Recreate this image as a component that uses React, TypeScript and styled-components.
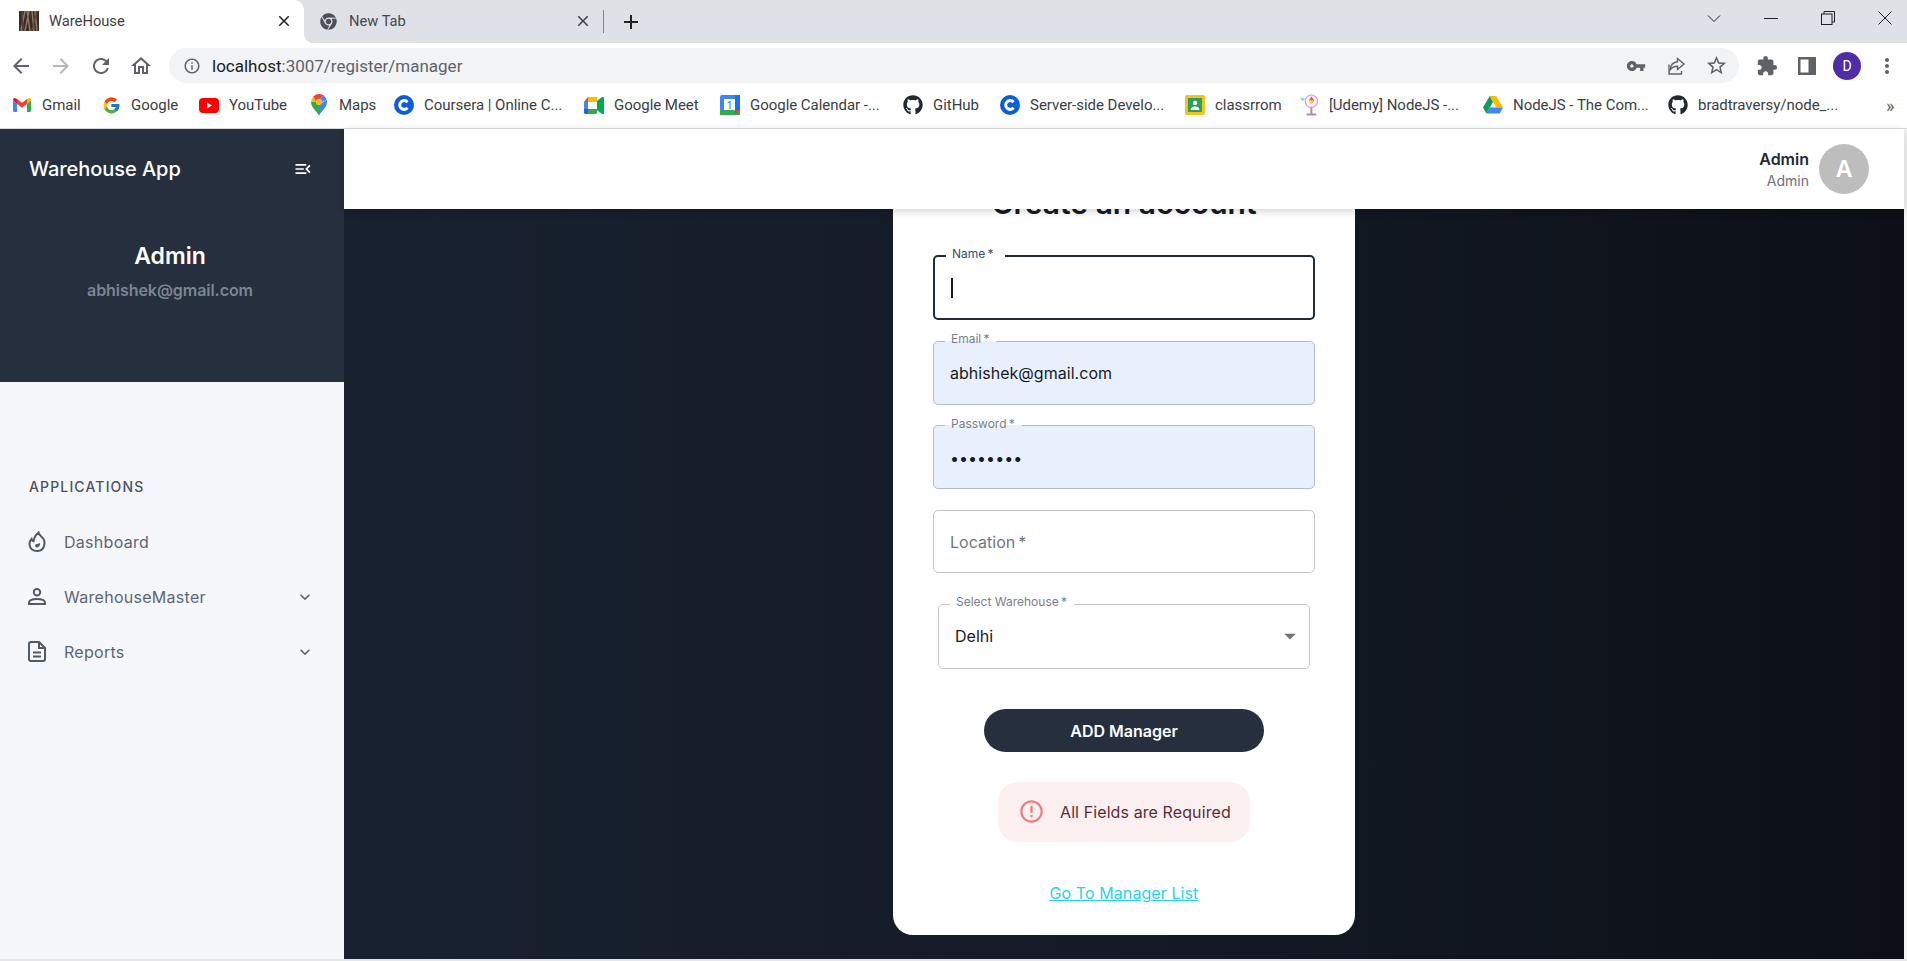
import React from "react"
import styled, { createGlobalStyle } from "styled-components"
import { FaChrome, FaGithub } from "react-icons/fa"
import { FcGoogle } from "react-icons/fc"
import {
  MdArrowBack,
  MdArrowForward,
  MdRefresh,
  MdOutlineHome,
  MdInfoOutline,
  MdVpnKey,
  MdStarBorder,
  MdExtension,
  MdMoreVert,
  MdClose,
  MdAdd,
  MdMenuOpen,
  MdExpandMore,
  MdArrowDropDown,
  MdErrorOutline,
} from "react-icons/md"

const GlobalStyle = createGlobalStyle`
  html, body, #root {
    margin: 0;
    height: 100%;
    overflow: hidden;
  }
  * {
    box-sizing: border-box;
  }
  body {
    font-family: Inter, "Liberation Sans", sans-serif;
    background: #fff;
  }
`

const Page = styled.div`
  display: flex;
  flex-direction: column;
  height: 961px;
  background: #e6e6e6;
`

/* browser chrome */
const TabStrip = styled.div`
  display: flex;
  align-items: stretch;
  flex: 0 0 43px;
  background: #dee1e6;
  font-family: Roboto, "Liberation Sans", sans-serif;
  color: #3c4043;
`

const Tab = styled.div<{ $active?: boolean }>`
  position: relative;
  display: flex;
  align-items: center;
  width: ${(p) => (p.$active ? "304px" : "299px")};
  padding: ${(p) => (p.$active ? "0 11px 1px 19px" : "0 11px 1px 16px")};
  background: ${(p) => (p.$active ? "#fff" : "transparent")};
  border-radius: 0 10px 0 0;
  font-size: 14.7px;

  &::after {
    content: ${(p) => (p.$active ? '""' : "none")};
    position: absolute;
    right: -10px;
    bottom: 0;
    width: 10px;
    height: 10px;
    background: radial-gradient(circle at top right, transparent 10px, #fff 10.5px);
  }
`

const TabTitle = styled.span<{ $active?: boolean }>`
  flex: 1;
  margin-left: ${(p) => (p.$active ? "10px" : "12px")};
  color: ${(p) => (p.$active ? "#3c4043" : "#45494e")};
`

const TabDivider = styled.div`
  flex: 0 0 1px;
  margin: 10px 0 10px;
  background: #80868b;
`

const NewTab = styled.div`
  display: flex;
  align-items: center;
  margin-left: 15px;
  flex: 1;
  color: #202124;
`

const WindowButtons = styled.div`
  display: flex;
  align-items: center;
  gap: 43px;
  padding: 0 15px 7px 0;
  color: #202124;
`

const Toolbar = styled.div`
  display: flex;
  align-items: center;
  flex: 0 0 40px;
  padding: 5px 0 0 9px;
  background: #fff;
  color: #5f6368;
`

const NavIcons = styled.div`
  display: flex;
  align-items: center;
  gap: 16px;
  width: 160px;
`

const UrlBar = styled.div`
  display: flex;
  align-items: center;
  width: 1570px;
  height: 35px;
  padding: 0 3px 0 14px;
  border-radius: 18px;
  background: #f1f3f4;
  font-family: Roboto, "Liberation Sans", sans-serif;
  font-size: 17px;
`

const UrlText = styled.span`
  flex: 1;
  margin-left: 11px;
  color: #5f6368;

  b {
    font-weight: 400;
    color: #202124;
  }
`

const IconSlot = styled.span`
  display: flex;
  align-items: center;
  justify-content: center;
  width: 40px;
`

const ToolbarEnd = styled.div`
  display: flex;
  align-items: center;
  margin-left: 8px;
`

const ProfileBadge = styled.div`
  display: flex;
  align-items: center;
  justify-content: center;
  width: 28px;
  height: 28px;
  border-radius: 50%;
  background: #4f2da7;
  color: #fff;
  font-family: Roboto, "Liberation Sans", sans-serif;
  font-size: 14px;
`

const Bookmarks = styled.div`
  display: flex;
  align-items: center;
  gap: 21px;
  flex: 0 0 46px;
  padding: 0 0 1px 12px;
  background: #fff;
  border-bottom: 1px solid #dadce0;
  font-family: Roboto, "Liberation Sans", sans-serif;
  font-size: 15px;
  letter-spacing: -0.03px;
  color: #3c4043;
`

const Bookmark = styled.div`
  display: flex;
  align-items: center;
  gap: 10px;
`

const BookmarkIcon = styled.span`
  display: flex;
  align-items: center;
  justify-content: center;
  width: 20px;
  height: 20px;
`

const BookmarkLabel = styled.span<{ $w: number }>`
  width: ${(p) => p.$w}px;
  white-space: nowrap;
`

const MoreBookmarks = styled.span`
  margin-left: 28px;
  font-size: 18px;
  color: #5f6368;
`

/* app */
const AppShell = styled.div`
  display: flex;
  flex: 0 0 830px;
  min-height: 0;
`

const Sidebar = styled.aside`
  display: flex;
  flex-direction: column;
  flex: 0 0 344px;
  background: #f5f7fa;
`

const SideHeader = styled.div`
  display: flex;
  flex-direction: column;
  flex: 0 0 253px;
  padding: 26px 29px 0;
  background: #252f3e;
  color: #fff;
`

const BrandRow = styled.div`
  display: flex;
  align-items: center;
  justify-content: space-between;
  padding-right: 2px;
  font-size: 20px;
  font-weight: 500;
  line-height: 28px;
  letter-spacing: -0.05px;
`

const SideUser = styled.div`
  display: flex;
  flex-direction: column;
  align-items: center;
  gap: 9px;
  margin: 58px 4px 0 0;
`

const SideName = styled.div`
  font-size: 23px;
  font-weight: 600;
  line-height: 30px;
`

const SideEmail = styled.div`
  font-size: 16px;
  font-weight: 600;
  line-height: 20px;
  letter-spacing: -0.05px;
  color: #7d8592;
`

const Nav = styled.nav`
  display: flex;
  flex-direction: column;
  padding: 95px 29px 0 28px;
  color: #5c6675;
`

const NavHeading = styled.div`
  margin: 0 0 17px 1px;
  font-size: 14px;
  font-weight: 500;
  letter-spacing: 1.15px;
  line-height: 20px;
  color: #4b5361;
`

const NavItem = styled.div`
  display: flex;
  align-items: center;
  height: 55px;
  font-size: 16px;
  font-weight: 400;
`

const NavIcon = styled.span`
  display: flex;
  align-items: center;
  justify-content: center;
  width: 18px;
  height: 24px;
`

const NavLabel = styled.span`
  flex: 1;
  margin-left: 18px;
  letter-spacing: 0.28px;
`

const Content = styled.div`
  display: flex;
  flex-direction: column;
  flex: 1;
  min-width: 0;
  padding-right: 3px;
  background: #f5f5f5;
`

const Topbar = styled.header`
  position: relative;
  z-index: 2;
  display: flex;
  align-items: center;
  justify-content: flex-end;
  gap: 10px;
  flex: 0 0 80px;
  padding: 0 35px 0 0;
  background: #fff;
  box-shadow: 0 2px 8px rgba(0, 0, 0, 0.18);
`

const TopUser = styled.div`
  display: flex;
  flex-direction: column;
  align-items: flex-end;
  gap: 3px;
`

const TopName = styled.div`
  font-size: 16px;
  font-weight: 600;
  line-height: 20px;
  color: #212b36;
`

const TopRole = styled.div`
  font-size: 14px;
  line-height: 18px;
  color: #6b7280;
`

const Avatar = styled.div`
  display: flex;
  align-items: center;
  justify-content: center;
  width: 50px;
  height: 50px;
  border-radius: 50%;
  background: #bdbdbd;
  color: #fff;
  font-size: 23px;
  font-weight: 600;
`

const Main = styled.main`
  display: flex;
  flex-direction: column;
  justify-content: flex-end;
  align-items: center;
  flex: 1;
  min-height: 0;
  overflow: hidden;
  padding-bottom: 24px;
  background: linear-gradient(90deg, #182130 0%, #141b27 50%, #0c1016 100%);
`

const Card = styled.section`
  display: flex;
  flex-direction: column;
  align-items: center;
  flex-shrink: 0;
  width: 462px;
  padding: 0 40px 32px;
  border-radius: 20px;
  background: #fff;
`

const CardTitle = styled.h1`
  margin: 0 0 28px;
  font-size: 30px;
  font-weight: 600;
  line-height: 36px;
  color: #161c24;
`

const Form = styled.form`
  display: flex;
  flex-direction: column;
  align-items: center;
  gap: 14px;
  width: 100%;
`

const Field = styled.fieldset<{ $h: number; $focused?: boolean; $filled?: boolean; $select?: boolean }>`
  display: block;
  margin: ${(p) => (p.$select ? "10px 0 0" : "0")};
  padding: 0 16px;
  width: ${(p) => (p.$select ? 372 : 382)}px;
  height: ${(p) => p.$h}px;
  min-width: 0;
  border: ${(p) => (p.$focused ? "2px solid #212b3b" : p.$filled ? "1px solid #b3bccb" : "1px solid #c4c4c4")};
  border-radius: 5px;
  background: ${(p) => (p.$filled ? "#e8f0fe" : "#fff")};
`

const FieldLabel = styled.legend<{ $focused?: boolean }>`
  margin-left: -5px;
  padding: 0 ${(p) => (p.$focused ? "11px" : "7px")} 0 6px;
  font-size: 12px;
  line-height: 14px;
  color: ${(p) => (p.$focused ? "#34506e" : "#7a7f87")};

  span {
    display: block;
    transform: translateY(-2px);
  }
`

const EmptyLabel = styled.legend`
  padding: 0;
  width: 0;
  height: 14px;
`

const FieldBody = styled.div<{ $select?: boolean }>`
  display: flex;
  align-items: center;
  justify-content: space-between;
  height: 48px;
  margin: 1px ${(p) => (p.$select ? "-11px" : "0")} 0 0;
`

const Caret = styled.span`
  width: 2px;
  height: 20px;
  background: #161c24;
`

const TextInput = styled.input`
  width: 100%;
  padding: 0;
  border: none;
  outline: none;
  background: transparent;
  font-family: inherit;
  font-size: 16px;
  letter-spacing: 0.03px;
  color: #161c24;

  &::placeholder {
    color: #6f7784;
    opacity: 1;
  }
`

const SelectValue = styled.span`
  font-size: 16px;
  color: #161c24;
`

const SubmitButton = styled.button`
  display: block;
  width: 280px;
  height: 43px;
  margin-top: 26px;
  border: none;
  border-radius: 22px;
  background: #252f3e;
  color: #fff;
  font-family: inherit;
  font-size: 16px;
  font-weight: 600;
`

const Alert = styled.div`
  display: flex;
  align-items: center;
  gap: 15px;
  width: 252px;
  height: 60px;
  margin-top: 16px;
  padding: 0 0 1px 20px;
  border-radius: 20px;
  background: #fbf0ef;
  color: #5f2d35;
  font-size: 16px;
  letter-spacing: 0.1px;
`

const ListLink = styled.a`
  margin-top: 27px;
  font-size: 16px;
  line-height: 20px;
  letter-spacing: 0.08px;
  text-decoration: underline;
  color: #2bd0ee;
`

const Footer = styled.div`
  flex: 1;
  background: #e6e6e6;
`

/* favicons */
const GmailIcon = () => (
  <svg width="18" height="14" viewBox="0 0 18 14">
    <path d="M0 2v10.5C0 13.3.7 14 1.5 14H4V6z" fill="#4285f4" />
    <path d="M14 6v8h2.5c.8 0 1.5-.7 1.5-1.5V2z" fill="#34a853" />
    <path d="M0 2l4 4V1L2.4.2C1.2-.4 0 .6 0 2z" fill="#c5221f" />
    <path d="M4 1v5l5 3.8L14 6V1L9 4.8z" fill="#ea4335" />
    <path d="M14 1v5l4-4c0-1.4-1.2-2.4-2.4-1.8z" fill="#fbbc04" />
  </svg>
)

const YouTubeIcon = () => (
  <svg width="20" height="15" viewBox="0 0 20 15">
    <rect width="20" height="15" rx="4" fill="#f00" />
    <path d="M8 4.5v6l5-3z" fill="#fff" />
  </svg>
)

const MapsIcon = () => (
  <svg width="16" height="22" viewBox="0 0 16 22">
    <path d="M8 22c-1-4-8-8-8-14h5c0 2 1.500 3 3 3z" fill="#34a853" />
    <path d="M8 22c1-4 8-8 8-14 0-.8-.1-1.600-.4-2.300L8 11z" fill="#4285f4" />
    <path d="M2.300 2.400A8 8 0 0 0 0 8h5z" fill="#fbbc04" />
    <path d="M2.300 2.400 5 8c0-1.700 1.300-3 3-3h.2L13 1.700A8 8 0 0 0 2.300 2.400z" fill="#ea4335" />
    <path d="M13 1.700 8 5c1.700 0 3 1.300 3 3l4.600-2.300A8 8 0 0 0 13 1.700z" fill="#4285f4" />
    <circle cx="8" cy="8" r="3" fill="#fbbc04" />
  </svg>
)

const CourseraIcon = () => (
  <svg width="20" height="20" viewBox="0 0 20 20">
    <circle cx="10" cy="10" r="10" fill="#0b5ed7" />
    <path d="M13.500 7.200a4.400 4.400 0 1 0 0 5.600" fill="none" stroke="#fff" strokeWidth="3" />
  </svg>
)

const MeetIcon = () => (
  <svg width="20" height="17" viewBox="0 0 20 17">
    <path d="M4 0h9v5H4z" fill="#fbbc04" />
    <path d="M4 0v5H0z" fill="#ea4335" />
    <path d="M0 5h4v7H0z" fill="#4285f4" />
    <path d="M0 12h4v5H1.500C.7 17 0 16.300 0 15.500z" fill="#1967d2" />
    <path d="M4 12h9v3.500c0 .8-.7 1.500-1.500 1.500H4z" fill="#34a853" />
    <path d="M13 4l5-4c.8-.5 2 0 2 1v15c0 1-1.200 1.500-2 1l-5-4z" fill="#00a94f" />
    <path d="M4 5h9v7H4z" fill="#fff" />
  </svg>
)

const CalendarIcon = () => (
  <svg width="20" height="20" viewBox="0 0 20 20">
    <rect width="20" height="20" rx="2" fill="#4285f4" />
    <rect x="0" y="15" width="20" height="5" fill="#34a853" />
    <rect x="15" y="0" width="5" height="15" fill="#1a73e8" />
    <path d="M15 15h5l-5 5z" fill="#ea4335" />
    <rect x="4" y="4" width="11" height="11" fill="#fff" />
    <text x="9.500" y="13.500" textAnchor="middle" fontSize="10" fontFamily="Roboto" fill="#1a73e8">1</text>
  </svg>
)

const ClassroomIcon = () => (
  <svg width="20" height="20" viewBox="0 0 20 20">
    <rect width="20" height="20" rx="2" fill="#f7c31a" />
    <rect x="3" y="3" width="14" height="14" fill="#2e9e5b" />
    <circle cx="10" cy="8" r="2.200" fill="#fff" />
    <path d="M5.500 15c0-2.500 2-3.500 4.500-3.500s4.500 1 4.500 3.500z" fill="#fff" />
  </svg>
)

const UdemyIcon = () => (
  <svg width="21" height="24" viewBox="0 0 21 24">
    <circle cx="13" cy="8" r="6.500" fill="#fbf3fb" stroke="#c9a6cf" strokeWidth="1.200" />
    <path d="M13 3l3 4-3 4-2.500-4z" fill="#f04a5f" />
    <path d="M10.500 7H15l-1.500 4h-2z" fill="#f5dc2c" />
    <path d="M1 4l5 1-2 3z" fill="#7fd6ea" />
    <path d="M13 14v7M8 22h10" stroke="#b48abb" strokeWidth="2" />
  </svg>
)

const DriveIcon = () => (
  <svg width="20" height="18" viewBox="0 0 20 18">
    <path d="M6.700 0h6.600l6.700 11.500h-6.600z" fill="#fbbc04" />
    <path d="M6.700 0 0 11.500 3.300 17.500 10 6z" fill="#0f9d58" />
    <path d="M3.300 17.500h13.400l3.300-6H6.700z" fill="#4285f4" />
  </svg>
)

const ShareIcon = () => (
  <svg width="20" height="20" viewBox="0 0 20 20" fill="none" stroke="currentColor" strokeWidth="1.400">
    <path d="M3 8.500V18h12.500v-3" />
    <path d="M11.500 2.500 18 8l-6.500 5.500v-3.200c-3 0-5.500 1-7.500 3.700.5-4.500 3-7.700 7.500-8.200z" />
  </svg>
)

const SidePanelIcon = () => (
  <svg width="18" height="18" viewBox="0 0 18 18">
    <path d="M0 0h18v18H0z" fill="#5f6368" />
    <path d="M2.500 2.500h8v13h-8z" fill="#fff" />
  </svg>
)

const Favicon = () => (
  <svg width="20" height="20" viewBox="0 0 20 20">
    <rect width="20" height="20" fill="#3a2c25" />
    <path d="M2 20 6 0M6 20 10 0M11 20 8 0M15 20 13 0M18 20 16 0" stroke="#8f7767" strokeWidth="1.500" />
    <path d="M4 20 3 0M13 20 18 0" stroke="#5d4538" strokeWidth="1.500" />
  </svg>
)

const RestoreIcon = () => (
  <svg width="14" height="14" viewBox="0 0 14 14" fill="none" stroke="currentColor" strokeWidth="1">
    <rect x="0.500" y="3" width="10.500" height="10.500" />
    <path d="M3 3V.5h10.500V11H11" />
  </svg>
)

const MinimizeIcon = () => (
  <svg width="14" height="14" viewBox="0 0 14 14" stroke="currentColor" strokeWidth="1">
    <path d="M0 7.500h14" />
  </svg>
)

const WindowCloseIcon = () => (
  <svg width="14" height="14" viewBox="0 0 14 14" stroke="currentColor" strokeWidth="1">
    <path d="M0.500.5l13 13M13.500.5l-13 13" />
  </svg>
)

const TabListIcon = () => (
  <svg width="14" height="14" viewBox="0 0 14 14" fill="none" stroke="currentColor" strokeWidth="1">
    <path d="M1 4.500l6 6 6-6" />
  </svg>
)

const FlameIcon = () => (
  <svg width="18" height="22" viewBox="0 0 18 22" fill="none" stroke="#505a69" strokeWidth="2">
    <path d="M10.500 1.500c.5 3 3.500 4 5 6.500 1.500 2.500 1.500 7-1 10-2.500 2.500-7.500 2.800-10.500.5C1 16 .5 11 3.500 8c.3 1.300 1 2 2 2.300C6 6.500 8 3.500 10.500 1.500z" />
    <path d="M12 12c.5 2-1 4.500-3 4.500-1.500 0-2.300-1.300-1.800-2.500.6-1.500 3.300-.8 4.800-2z" fill="#505a69" stroke="none" />
  </svg>
)

const PersonIcon = () => (
  <svg width="18" height="17" viewBox="0 0 18 17" fill="none" stroke="#505a69" strokeWidth="2">
    <circle cx="9" cy="4.200" r="3.200" />
    <path d="M1 16v-1.300c0-2.500 4-3.700 8-3.700s8 1.200 8 3.700V16z" />
  </svg>
)

const ReportIcon = () => (
  <svg width="18" height="21" viewBox="0 0 18 21" fill="none" stroke="#505a69" strokeWidth="2">
    <path d="M3 1h8l6 6v11a2 2 0 0 1-2 2H3a2 2 0 0 1-2-2V3a2 2 0 0 1 2-2z" />
    <path d="M11 1v6h6" />
    <path d="M5 11.500h8M5 15.500h8" />
  </svg>
)

const bookmarks = [
  { icon: <GmailIcon />, label: "Gmail", w: 38 },
  { icon: <FcGoogle size={19} />, label: "Google", w: 47 },
  { icon: <YouTubeIcon />, label: "YouTube", w: 59 },
  { icon: <MapsIcon />, label: "Maps", w: 34 },
  { icon: <CourseraIcon />, label: "Coursera | Online C...", w: 139 },
  { icon: <MeetIcon />, label: "Google Meet", w: 85 },
  { icon: <CalendarIcon />, label: "Google Calendar -...", w: 132 },
  { icon: <FaGithub size={20} color="#24292f" />, label: "GitHub", w: 46 },
  { icon: <CourseraIcon />, label: "Server-side Develo...", w: 134 },
  { icon: <ClassroomIcon />, label: "classrrom", w: 63 },
  { icon: <UdemyIcon />, label: "[Udemy] NodeJS -...", w: 133 },
  { icon: <DriveIcon />, label: "NodeJS - The Com...", w: 134 },
  { icon: <FaGithub size={20} color="#24292f" />, label: "bradtraversy/node_...", w: 139 },
]

export default function App() {
  return (
    <Page>
      <GlobalStyle />
      <TabStrip>
        <Tab $active>
          <Favicon />
          <TabTitle $active>WareHouse</TabTitle>
          <MdClose size={18} color="#202124" />
        </Tab>
        <Tab>
          <FaChrome size={17} color="#4d5156" />
          <TabTitle>New Tab</TabTitle>
          <MdClose size={18} color="#3c4043" />
        </Tab>
        <TabDivider />
        <NewTab>
          <MdAdd size={24} />
        </NewTab>
        <WindowButtons>
          <TabListIcon />
          <MinimizeIcon />
          <RestoreIcon />
          <WindowCloseIcon />
        </WindowButtons>
      </TabStrip>

      <Toolbar>
        <NavIcons>
          <MdArrowBack size={24} />
          <MdArrowForward size={24} color="#b4b7bb" />
          <MdRefresh size={24} />
          <MdOutlineHome size={24} />
        </NavIcons>
        <UrlBar>
          <MdInfoOutline size={18} />
          <UrlText>
            <b>localhost</b>:3007/register/manager
          </UrlText>
          <IconSlot>
            <MdVpnKey size={20} />
          </IconSlot>
          <IconSlot>
            <ShareIcon />
          </IconSlot>
          <IconSlot>
            <MdStarBorder size={23} />
          </IconSlot>
        </UrlBar>
        <ToolbarEnd>
          <IconSlot>
            <MdExtension size={22} />
          </IconSlot>
          <IconSlot>
            <SidePanelIcon />
          </IconSlot>
          <IconSlot>
            <ProfileBadge>D</ProfileBadge>
          </IconSlot>
          <IconSlot>
            <MdMoreVert size={24} />
          </IconSlot>
        </ToolbarEnd>
      </Toolbar>

      <Bookmarks>
        {bookmarks.map((b) => (
          <Bookmark key={b.label}>
            <BookmarkIcon>{b.icon}</BookmarkIcon>
            <BookmarkLabel $w={b.w}>{b.label}</BookmarkLabel>
          </Bookmark>
        ))}
        <MoreBookmarks>»</MoreBookmarks>
      </Bookmarks>

      <AppShell>
        <Sidebar>
          <SideHeader>
            <BrandRow>
              Warehouse App
              <MdMenuOpen size={20} />
            </BrandRow>
            <SideUser>
              <SideName>Admin</SideName>
              <SideEmail>abhishek@gmail.com</SideEmail>
            </SideUser>
          </SideHeader>
          <Nav>
            <NavHeading>APPLICATIONS</NavHeading>
            <NavItem>
              <NavIcon>
                <FlameIcon />
              </NavIcon>
              <NavLabel>Dashboard</NavLabel>
            </NavItem>
            <NavItem>
              <NavIcon>
                <PersonIcon />
              </NavIcon>
              <NavLabel>WarehouseMaster</NavLabel>
              <MdExpandMore size={20} />
            </NavItem>
            <NavItem>
              <NavIcon>
                <ReportIcon />
              </NavIcon>
              <NavLabel>Reports</NavLabel>
              <MdExpandMore size={20} />
            </NavItem>
          </Nav>
        </Sidebar>

        <Content>
          <Topbar>
            <TopUser>
              <TopName>Admin</TopName>
              <TopRole>Admin</TopRole>
            </TopUser>
            <Avatar>A</Avatar>
          </Topbar>
          <Main>
            <Card>
              <CardTitle>Create an account</CardTitle>
              <Form>
                <Field $h={71} $focused>
                  <FieldLabel $focused>
                    <span>Name{"\u2009"}*</span>
                  </FieldLabel>
                  <FieldBody>
                    <Caret />
                  </FieldBody>
                </Field>
                <Field $h={70.5} $filled>
                  <FieldLabel>
                    <span>Email{"\u2009"}*</span>
                  </FieldLabel>
                  <FieldBody>
                    <TextInput readOnly value="abhishek@gmail.com" />
                  </FieldBody>
                </Field>
                <Field $h={70.5} $filled>
                  <FieldLabel>
                    <span>Password{"\u2009"}*</span>
                  </FieldLabel>
                  <FieldBody>
                    <TextInput readOnly type="password" value="password" />
                  </FieldBody>
                </Field>
                <Field $h={70}>
                  <EmptyLabel />
                  <FieldBody>
                    <TextInput readOnly placeholder={"Location\u2009*"} />
                  </FieldBody>
                </Field>
                <Field $h={72} $select>
                  <FieldLabel>
                    <span>Select Warehouse{"\u2009"}*</span>
                  </FieldLabel>
                  <FieldBody $select>
                    <SelectValue>Delhi</SelectValue>
                    <MdArrowDropDown size={28} color="#757575" />
                  </FieldBody>
                </Field>
                <SubmitButton type="button">ADD Manager</SubmitButton>
                <Alert>
                  <MdErrorOutline size={27} color="#e98080" />
                  All Fields are Required
                </Alert>
                <ListLink href="#">Go To Manager List</ListLink>
              </Form>
            </Card>
          </Main>
        </Content>
      </AppShell>
      <Footer />
    </Page>
  )
}
